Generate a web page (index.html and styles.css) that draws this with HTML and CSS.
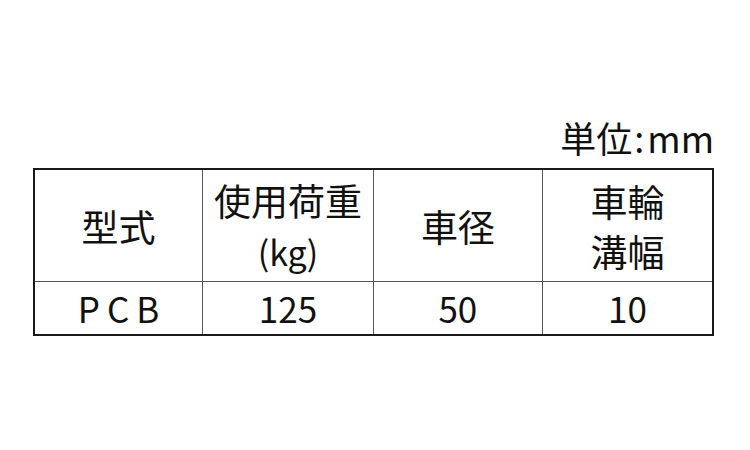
FILE: index.html
```html
<!DOCTYPE html>
<html lang="ja">
<head>
<meta charset="utf-8">
<link rel="stylesheet" href="styles.css">
</head>
<body>
<div class="page">
  <div class="unit">単位<span class="colon">:</span>mm</div>
  <table class="spec">
    <colgroup>
      <col class="c1"><col class="c2"><col class="c3"><col class="c4">
    </colgroup>
    <tr class="head">
      <td>型式</td>
      <td>使用荷重<br><span class="kg">(kg)</span></td>
      <td>車径</td>
      <td>車輪<br>溝幅</td>
    </tr>
    <tr class="data">
      <td class="model">PCB</td>
      <td>125</td>
      <td>50</td>
      <td>10</td>
    </tr>
  </table>
</div>
</body>
</html>
```
FILE: styles.css
```css
html, body {
  margin: 0;
  padding: 0;
  background: #fff;
}
.page {
  width: 750px;
  height: 450px;
  padding: 114px 36px 0 33px;
  box-sizing: border-box;
  font-family: "Noto Sans CJK JP", "Noto Sans", sans-serif;
  color: #111;
}
.unit {
  text-align: right;
  font-size: 36px;
  line-height: 46px;
  height: 54px;
}
.colon {
  margin: 0 3px 0 2px;
}
.spec {
  width: 681px;
  border-collapse: collapse;
  border: 2px solid #1a1a1a;
}
.c1 { width: 169px; }
.c2 { width: 171px; }
.c3 { width: 170px; }
.c4 { width: 171px; }
.spec td {
  border: 1px solid #555;
  text-align: center;
  vertical-align: middle;
  padding: 0;
  font-size: 37px;
}
.head td {
  height: 111px;
  line-height: 50px;
}
.kg {
  font-size: 34px;
}
.data td {
  height: 52px;
  line-height: 52px;
  font-size: 35px;
}
.data td.model {
  letter-spacing: 7px;
  padding-left: 7px;
}
```
